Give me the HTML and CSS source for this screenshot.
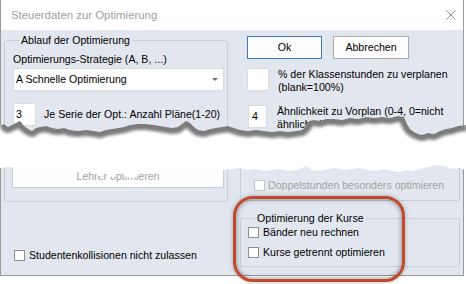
FILE: index.html
```html
<!DOCTYPE html>
<html lang="de">
<head>
  <meta charset="UTF-8">
  <title>Steuerdaten zur Optimierung</title>
  <link rel="stylesheet" href="styles.css">
</head>
<body>
  <div class="window">
    <div class="titlebar">
      <span class="title">Steuerdaten zur Optimierung</span>
      <svg class="close" width="10" height="10" viewBox="0 0 10 10">
        <path d="M0.5 0.5 L9.5 9.5 M9.5 0.5 L0.5 9.5" stroke="#8f8f8f" stroke-width="1" fill="none"/>
      </svg>
    </div>

    <div class="dialog">
      <div class="col-left">
        <fieldset class="group group-ablauf">
          <legend>Ablauf der Optimierung</legend>
          <div class="label">Optimierungs-Strategie (A, B, ...)</div>
          <div class="select">
            <span>A Schnelle Optimierung</span>
            <span class="arrow"></span>
          </div>
          <div class="row row-serie">
            <div class="input input-serie">3</div>
            <span>Je Serie der Opt.: Anzahl Pläne(1-20)</span>
          </div>
          <div class="btn btn-lehrer disabled">Lehrer optimieren</div>
        </fieldset>
        <div class="check check-studenten">
          <span class="box"></span>
          <span>Studentenkollisionen nicht zulassen</span>
        </div>
      </div>

      <div class="col-right">
        <div class="buttons">
          <div class="btn btn-ok">Ok</div>
          <div class="btn btn-cancel">Abbrechen</div>
        </div>
        <div class="row row-prozent">
          <div class="input input-prozent"></div>
          <span>% der Klassenstunden zu verplanen<br>(blank=100%)</span>
        </div>
        <div class="row row-vorplan">
          <div class="input input-vorplan">4</div>
          <span>Ähnlichkeit zu Vorplan (0-4, 0=nicht<br>ähnlich, 4=sehr ähnlich)</span>
        </div>
        <fieldset class="group group-doppel">
          <div class="check disabled">
            <span class="box"></span>
            <span>Doppelstunden besonders optimieren</span>
          </div>
        </fieldset>
        <fieldset class="group group-kurse">
          <legend>Optimierung der Kurse</legend>
          <div class="check">
            <span class="box"></span>
            <span>Bänder neu rechnen</span>
          </div>
          <div class="check">
            <span class="box"></span>
            <span>Kurse getrennt optimieren</span>
          </div>
        </fieldset>
      </div>
    </div>
  </div>

  <!-- torn paper overlay -->
  <svg class="tear" width="466" height="284" viewBox="0 0 466 284">
    <defs>
      <filter id="soft" x="-5%" y="-50%" width="110%" height="200%">
        <feGaussianBlur stdDeviation="1.6"/>
      </filter>
      <clipPath id="tear-clip">
        <path id="tear-shape" d="M0 126 L4 124 L8 127 L12 125 L16 123 L20 121 L24 126 L28 129 L32 131 L36 128 L40 127 L46 126 L52 128 L58 129 L64 128 L70 130 L78 131 L86 130 L94 131 L100 132 L106 130 L112 129 L118 128 L124 127 L130 125 L138 124 L146 124 L154 125 L160 126 L166 127 L172 128 L178 127 L182 124 L186 121 L190 123 L194 127 L198 130 L204 131 L210 129 L216 128 L222 127 L228 126 L234 128 L240 130 L248 131 L256 130 L264 131 L272 132 L280 131 L288 132 L296 131 L302 130 L306 126 L309 121 L314 120 L320 121 L326 119 L334 119 L342 120 L350 118 L358 119 L366 117 L374 118 L382 117 L390 118 L398 116 L404 117 L407 124 L410 129 L414 132 L418 134 L422 135 L428 133 L434 134 L440 131 L446 129 L452 128 L458 126 L466 125 L466 170 L460 168 L452 169 L444 166 L436 165 L428 167 L420 169 L414 171 L408 170 L400 172 L392 171 L384 169 L376 171 L368 170 L360 168 L352 169 L344 170 L336 168 L328 169 L320 171 L312 170 L306 166 L302 168 L296 170 L288 171 L280 169 L272 170 L264 171 L256 169 L248 170 L240 168 L232 169 L224 170 L216 171 L208 169 L200 170 L192 168 L184 169 L176 170 L168 171 L160 170 L152 169 L144 170 L139 172 L137 177 L130 178 L124 176 L122 171 L117 170 L115 177 L108 177 L106 171 L104 170 L103 177 L98 176 L96 172 L88 171 L80 170 L72 171 L64 170 L56 169 L48 170 L40 171 L32 169 L24 170 L16 168 L8 167 L0 168 Z"/>
      </clipPath>
    </defs>
    <use href="#tear-shape" fill="#ffffff"/>
    <path d="M0 126 L4 124 L8 127 L12 125 L16 123 L20 121 L24 126 L28 129 L32 131 L36 128 L40 127 L46 126 L52 128 L58 129 L64 128 L70 130 L78 131 L86 130 L94 131 L100 132 L106 130 L112 129 L118 128 L124 127 L130 125 L138 124 L146 124 L154 125 L160 126 L166 127 L172 128 L178 127 L182 124 L186 121 L190 123 L194 127 L198 130 L204 131 L210 129 L216 128 L222 127 L228 126 L234 128 L240 130 L248 131 L256 130 L264 131 L272 132 L280 131 L288 132 L296 131 L302 130 L306 126 L309 121 L314 120 L320 121 L326 119 L334 119 L342 120 L350 118 L358 119 L366 117 L374 118 L382 117 L390 118 L398 116 L404 117 L407 124 L410 129 L414 132 L418 134 L422 135 L428 133 L434 134 L440 131 L446 129 L452 128 L458 126 L466 125"
          fill="none" stroke="#7c7c7c" stroke-width="12" stroke-linejoin="round"
          filter="url(#soft)" clip-path="url(#tear-clip)"/>
  </svg>

  <div class="highlight"></div>
</body>
</html>
```

FILE: styles.css
```css
body {
  margin: 0;
  width: 466px;
  height: 284px;
  overflow: hidden;
  position: relative;
  background-color: #fff;
  font-family: "Liberation Sans", Arial, sans-serif;
  font-size: 10.6px;
  line-height: 13px;
  color: #000;
  white-space: nowrap;
}
.window {
  width: 462px;
  border: 1px solid #9a9a9a;
  border-top: none;
}
.titlebar {
  height: 30px;
  background-color: #fff;
  display: flex;
  align-items: center;
  justify-content: space-between;
  padding: 0 7px 0 10px;
}
.title {
  font-size: 11.4px;
  color: #a0a0a0;
}
.close {
  display: block;
}
.dialog {
  box-sizing: border-box;
  height: 245px;
  background-color: #e2e7ef;
  padding: 4px 3px 0;
  display: flex;
  gap: 12px;
}
.col-left {
  width: 224px;
  display: flex;
  flex-direction: column;
}
.col-right {
  width: 220px;
  padding-top: 2px;
  display: flex;
  flex-direction: column;
}

/* group boxes */
.group {
  margin: 0;
  min-width: 0;
  border: 1px solid #c9ced5;
  border-radius: 3px;
}
.group legend {
  padding: 0 2px;
  line-height: 13px;
}
.group-ablauf {
  padding: 6px 3px 13px 8px;
}
.group-ablauf legend {
  margin-left: 6px;
}
.group-doppel {
  margin-top: 17px;
  padding: 30px 8px 8px 13px;
}
.group-kurse {
  margin-top: 11px;
  padding: 1px 8px 7px 7px;
  display: flex;
  flex-direction: column;
  gap: 7px;
}
.group-kurse legend {
  margin-left: 7px;
}

/* controls */
.select {
  box-sizing: border-box;
  height: 23px;
  margin-top: 2px;
  background-color: #fff;
  border: 1px solid #d9dbde;
  display: flex;
  align-items: center;
  justify-content: space-between;
  padding: 0 5px 0 2px;
}
.arrow {
  width: 0;
  height: 0;
  border-left: 3px solid transparent;
  border-right: 3px solid transparent;
  border-top: 3px solid #6f6f6f;
}
.row {
  display: flex;
}
.input {
  box-sizing: border-box;
  height: 23px;
  background-color: #fff;
  border: 1px solid #d9dbde;
  padding: 4px 2px;
  flex-shrink: 0;
}
.row-serie {
  margin-top: 12px;
  align-items: center;
  gap: 8px;
}
.input-serie {
  width: 23px;
}
.row-prozent {
  margin-top: 9px;
  padding-left: 7px;
  gap: 9px;
}
.input-prozent {
  width: 22px;
}
.row-vorplan {
  margin-top: 11px;
  padding-left: 8px;
  gap: 10px;
}
.input-vorplan {
  width: 19px;
  padding-left: 3px;
}
.btn {
  box-sizing: border-box;
  height: 23px;
  background-color: #fdfdfd;
  border: 1px solid #adadad;
  display: flex;
  align-items: center;
  justify-content: center;
}
.buttons {
  display: flex;
  gap: 11px;
  padding-left: 7px;
}
.btn-ok {
  width: 75px;
  border-color: #3c7ab8;
}
.btn-cancel {
  width: 76px;
}
.btn-lehrer {
  margin-top: 39px;
  margin-left: -1px;
  border-color: #c9ccd0;
}
.disabled {
  color: #a3a3a3;
}

/* checkboxes */
.check {
  display: flex;
  align-items: center;
  height: 13px;
  gap: 4px;
}
.box {
  box-sizing: border-box;
  width: 11px;
  height: 11px;
  background-color: #fff;
  border: 1px solid #8e8e8e;
}
.check.disabled {
  gap: 3px;
}
.check.disabled .box {
  border-color: #c4c6ca;
}
.check-studenten {
  margin-top: 47px;
  margin-left: 10px;
}

/* overlays */
.tear {
  position: absolute;
  left: 0;
  top: 0;
  pointer-events: none;
}
.highlight {
  position: absolute;
  left: 233px;
  top: 196px;
  width: 172px;
  height: 86px;
  box-sizing: border-box;
  border: 3px solid #c1492d;
  border-radius: 20px;
  box-shadow: 0 0 4px rgba(0, 0, 0, 0.3), inset 0 0 4px 1px rgba(0, 0, 0, 0.35);
}
```
